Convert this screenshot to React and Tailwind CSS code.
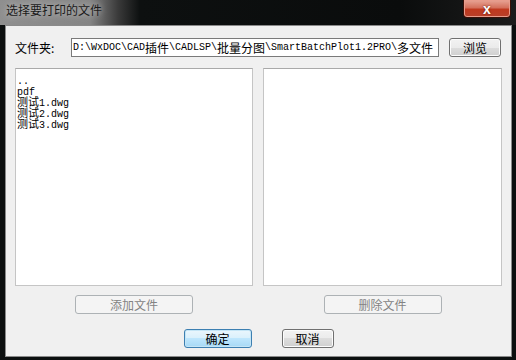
import React from 'react';

const cjk = '"Noto Sans CJK SC", "Liberation Sans", sans-serif';

// SimSun 风格: ASCII 半角, 汉字全角
const MonoText = ({ text, size = 12, lh = 12 }) => {
    const runs = text.match(/[\x00-\x7f]+|[^\x00-\x7f]+/g) || [];
    return runs.map((r, i) =>
        /^[\x00-\x7f]/.test(r) ? (
            <span key={i} className="font-['Liberation_Mono',monospace] text-[10px]" style={{ lineHeight: lh + 'px' }}>{r}</span>
        ) : (
            <span key={i} style={{ fontSize: size + 'px', lineHeight: lh + 'px' }}>{r}</span>
        )
    );
};

const WinButton = ({ children, className = '', disabled, primary }) => (
    <button
        className={
            'h-[19px] rounded-[3px] border text-[12px] leading-none flex items-center justify-center ' +
            (disabled
                ? 'border-[#adb2b5] bg-[#f4f4f4] text-[#838383] '
                : primary
                ? 'border-[#3c7fb1] bg-[linear-gradient(#eaf6fd,#d9f0fc_50%,#bee6fd_50%,#a7d9f5)] text-black shadow-[inset_0_0_0_1px_#c4e5f6] '
                : 'border-[#707070] bg-[linear-gradient(#f2f2f2,#ebebeb_50%,#dddddd_50%,#cfcfcf)] text-black shadow-[inset_0_0_0_1px_#fcfcfc] ') +
            className
        }
    >
        {children}
    </button>
);

const files = ['..', 'pdf', '测试1.dwg', '测试2.dwg', '测试3.dwg'];

export default function App() {
    return (
        <div
            className="w-[516px] h-[360px] flex flex-col bg-[#0c0f0f] overflow-hidden"
            style={{ fontFamily: cjk }}
        >
            {/* 标题栏 */}
            <div className="h-[25px] flex items-start bg-[linear-gradient(to_right,#8f8f8f_0px,#858585_90px,#3a3a3a_118px,#0d1010_140px,#0a0c0c_400px,#1c1c1c_516px)]">
                <span className="ml-[6px] mt-[3px] text-[12px] leading-[14px] text-[#1a1a1a] [text-shadow:0_0_6px_#d0d0d0]">
                    选择要打印的文件
                </span>
                <div className="ml-auto mr-[5px] w-[48px] h-[18px] rounded-b-[4px] border border-t-0 border-[#3a1008] bg-[linear-gradient(#e8a596,#d4705c_45%,#c0391f_55%,#b8402a)] flex items-center justify-center shadow-[inset_0_0_0_1px_#e89c8c]">
                    <span className="text-white font-bold text-[14px] leading-none font-['Liberation_Sans',sans-serif] [text-shadow:0_0_2px_#5a1000]">x</span>
                </div>
            </div>

            {/* 客户区 */}
            <div className="ml-[5px] mr-[4px] h-[332px] bg-[#f0f0f0] border border-[#8a8a8a] flex flex-col px-[9px]">
                <div className="mt-[12px] h-[19px] flex items-center">
                    <span className="w-[56px] text-[12px] text-black">文件夹:</span>
                    <div className="w-[368px] h-[19px] bg-white border border-[#7a7a7a] overflow-hidden whitespace-nowrap flex items-center pl-[1px] leading-none">
                        <MonoText text="D:\WxDOC\CAD插件\CADLSP\批量分图\SmartBatchPlot1.2PRO\多文件" />
                    </div>
                    <WinButton className="ml-[10px] w-[52px]">浏览</WinButton>
                </div>

                <div className="mt-[11px] h-[218px] flex gap-[10px]">
                    <div className="w-[238px] bg-white border border-[#c5c5c5] border-t-[#a9a9a9] pl-[1px] pt-[3px]">
                        {files.map(f => (
                            <div key={f} className="h-[11px] leading-[11px] whitespace-nowrap">
                                <MonoText text={f} size={11} lh={11} />
                            </div>
                        ))}
                    </div>
                    <div className="w-[239px] bg-white border border-[#c5c5c5] border-t-[#a9a9a9]" />
                </div>

                <div className="mt-[9px] flex gap-[10px]">
                    <div className="w-[238px] flex justify-center">
                        <WinButton disabled className="w-[118px]">添加文件</WinButton>
                    </div>
                    <div className="w-[239px] flex justify-center">
                        <WinButton disabled className="w-[118px]">删除文件</WinButton>
                    </div>
                </div>

                <div className="mt-[15px] flex justify-center gap-[30px]">
                    <WinButton primary className="w-[68px]">确定</WinButton>
                    <WinButton className="w-[52px]">取消</WinButton>
                </div>
            </div>
        </div>
    );
}
